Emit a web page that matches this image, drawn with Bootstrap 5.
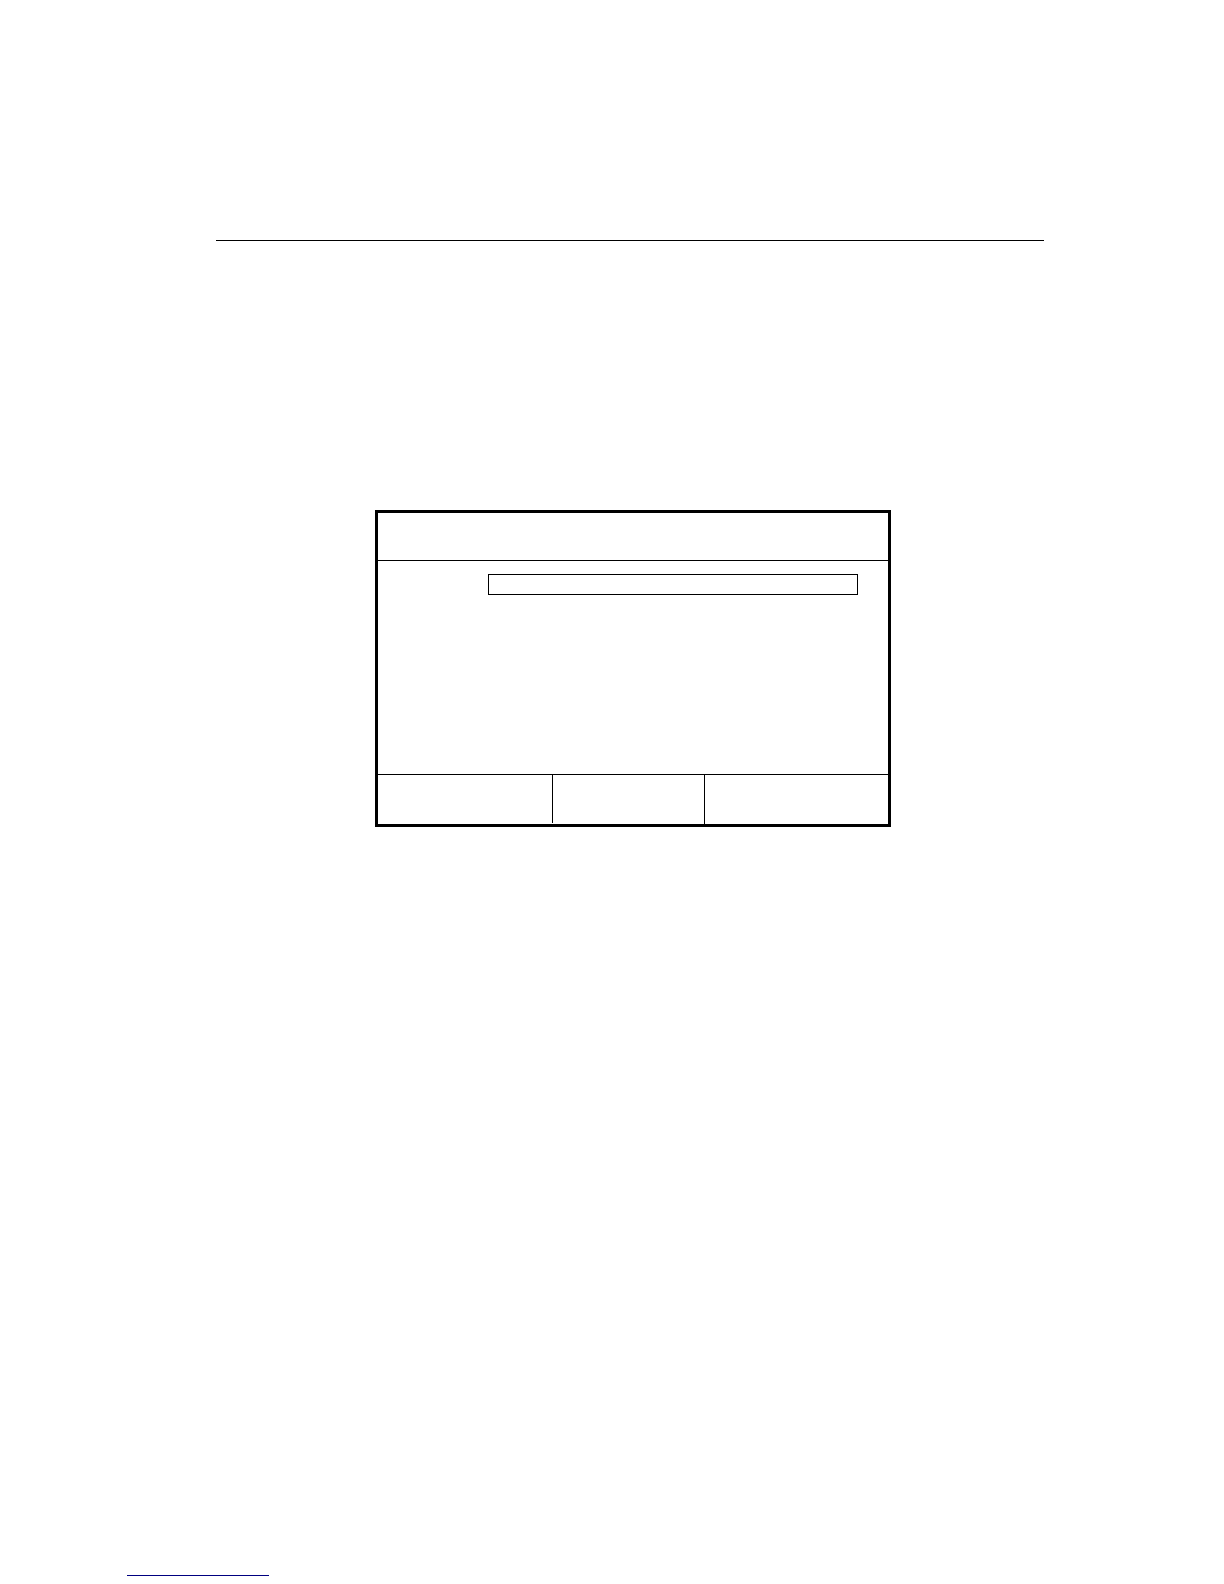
<!DOCTYPE html>
<html lang="en">
<head>
<meta charset="utf-8">
<meta name="viewport" content="width=device-width, initial-scale=1">
<title>Form</title>
<link href="https://cdn.jsdelivr.net/npm/bootstrap@5.3.0/dist/css/bootstrap.min.css" rel="stylesheet">
<style>
  body { background: #fff; color: #000; font-family: "Liberation Sans", sans-serif; }
  .page-main { padding: 240px 180px 0 216px; }
  .page-rule { border-top: 1px solid #000; opacity: 1; }
  .panel { margin: 269px 153px 0 159px; border: 3px solid #000; }
  .panel-head { height: 48px; border-bottom: 1px solid #000; }
  .panel-body { min-height: 213px; padding: 13px 30px 0 110px; }
  .entry { height: 21px; min-height: 0; border: 1px solid #000; }
  .panel-foot { height: 50px; border-top: 1px solid #000; }
  .softkey { background: none; flex: 1 1 0; }
  .softkey-first { flex: 0 0 175px; border-right: 1px solid #000 !important; margin-bottom: 1px; }
  .softkey-mid { flex: 0 0 152px; border-right: 1px solid #000 !important; }
  .page-foot { padding: 0 0 8px 127px; }
  .foot-link { width: 142px; height: 16px; border-bottom: 1px solid #000080; }
</style>
<script src="https://cdn.jsdelivr.net/npm/bootstrap@5.3.0/dist/js/bootstrap.bundle.min.js" defer></script>
</head>
<body>
<div class="d-flex flex-column min-vh-100">
  <main class="page-main">
    <hr class="page-rule m-0">
    <form class="panel">
      <div class="panel-head"></div>
      <div class="panel-body">
        <input type="text" class="entry form-control rounded-0 px-1 py-0" aria-label="Entry">
      </div>
      <div class="panel-foot d-flex">
        <button type="button" class="softkey-first softkey border-0 p-0" aria-label="Left key"></button>
        <button type="button" class="softkey-mid softkey border-0 p-0" aria-label="Middle key"></button>
        <button type="button" class="softkey border-0 p-0" aria-label="Right key"></button>
      </div>
    </form>
  </main>
  <footer class="page-foot mt-auto">
    <a href="#" class="foot-link d-block" aria-label="Footer link"></a>
  </footer>
</div>
</body>
</html>
